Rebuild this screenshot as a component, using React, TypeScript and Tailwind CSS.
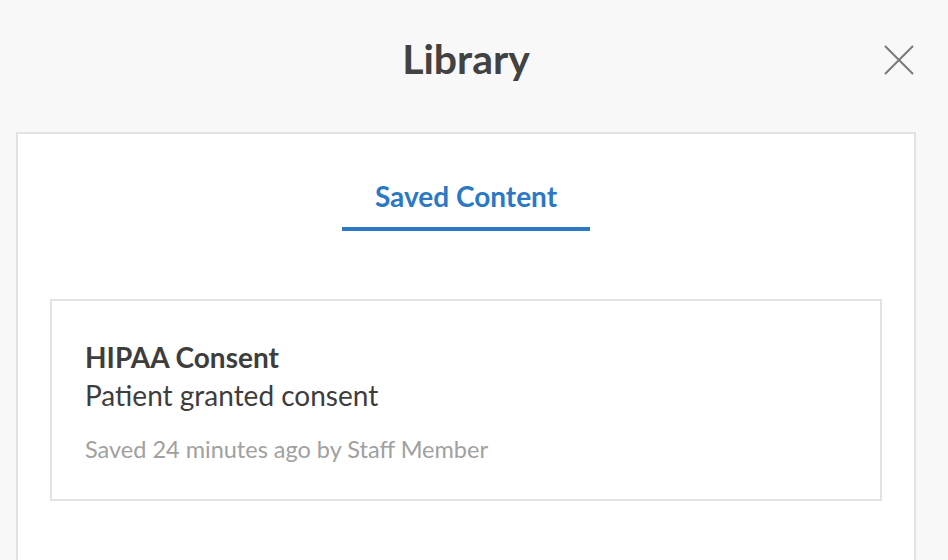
export default function App() {
  return (
    <div className="min-h-screen flex flex-col bg-[#f8f8f8] pr-[16px] font-['Lato','Noto_Sans',sans-serif]">
      {/* header */}
      <div className="h-[132px] shrink-0 grid grid-cols-[1fr_auto_1fr] items-start pt-[35px]">
        <div />
        <h1 className="text-[41px] leading-[48px] font-bold text-[#424242]">Library</h1>
        <div className="flex justify-end pr-[18px] pt-[10px]">
          <button aria-label="Close" className="w-[30px] h-[30px] flex items-center justify-center">
            <svg width="30" height="30" viewBox="0 0 30 30" fill="none">
              <path d="M1 1L29 29M29 1L1 29" stroke="#7a7a7a" strokeWidth="2" />
            </svg>
          </button>
        </div>
      </div>

      {/* panel */}
      <div className="flex-1 mx-[16px] bg-white border-2 border-b-0 border-[#e2e2e2] flex flex-col">
        <div className="flex justify-center pt-[46px]">
          <div className="w-[248px] text-center border-b-4 border-[#2b78c5] pb-[14px]">
            <span className="text-[28px] leading-[32px] font-bold text-[#2b78c5]">Saved Content</span>
          </div>
        </div>

        <div className="mx-[32px] mt-[68px] border-2 border-[#e3e3e3] pl-[33px] pr-8 pt-[37px] pb-[35px]">
          <div className="text-[28px] leading-[38px] font-bold text-[#3d3d3d]">HIPAA Consent</div>
          <div className="text-[28px] leading-[38px] text-[#3d3d3d]">Patient granted consent</div>
          <div className="mt-[20px] text-[23.5px] leading-[30px] text-[#a0a0a0]">
            Saved 24 minutes ago by Staff Member
          </div>
        </div>
      </div>
    </div>
  );
}
